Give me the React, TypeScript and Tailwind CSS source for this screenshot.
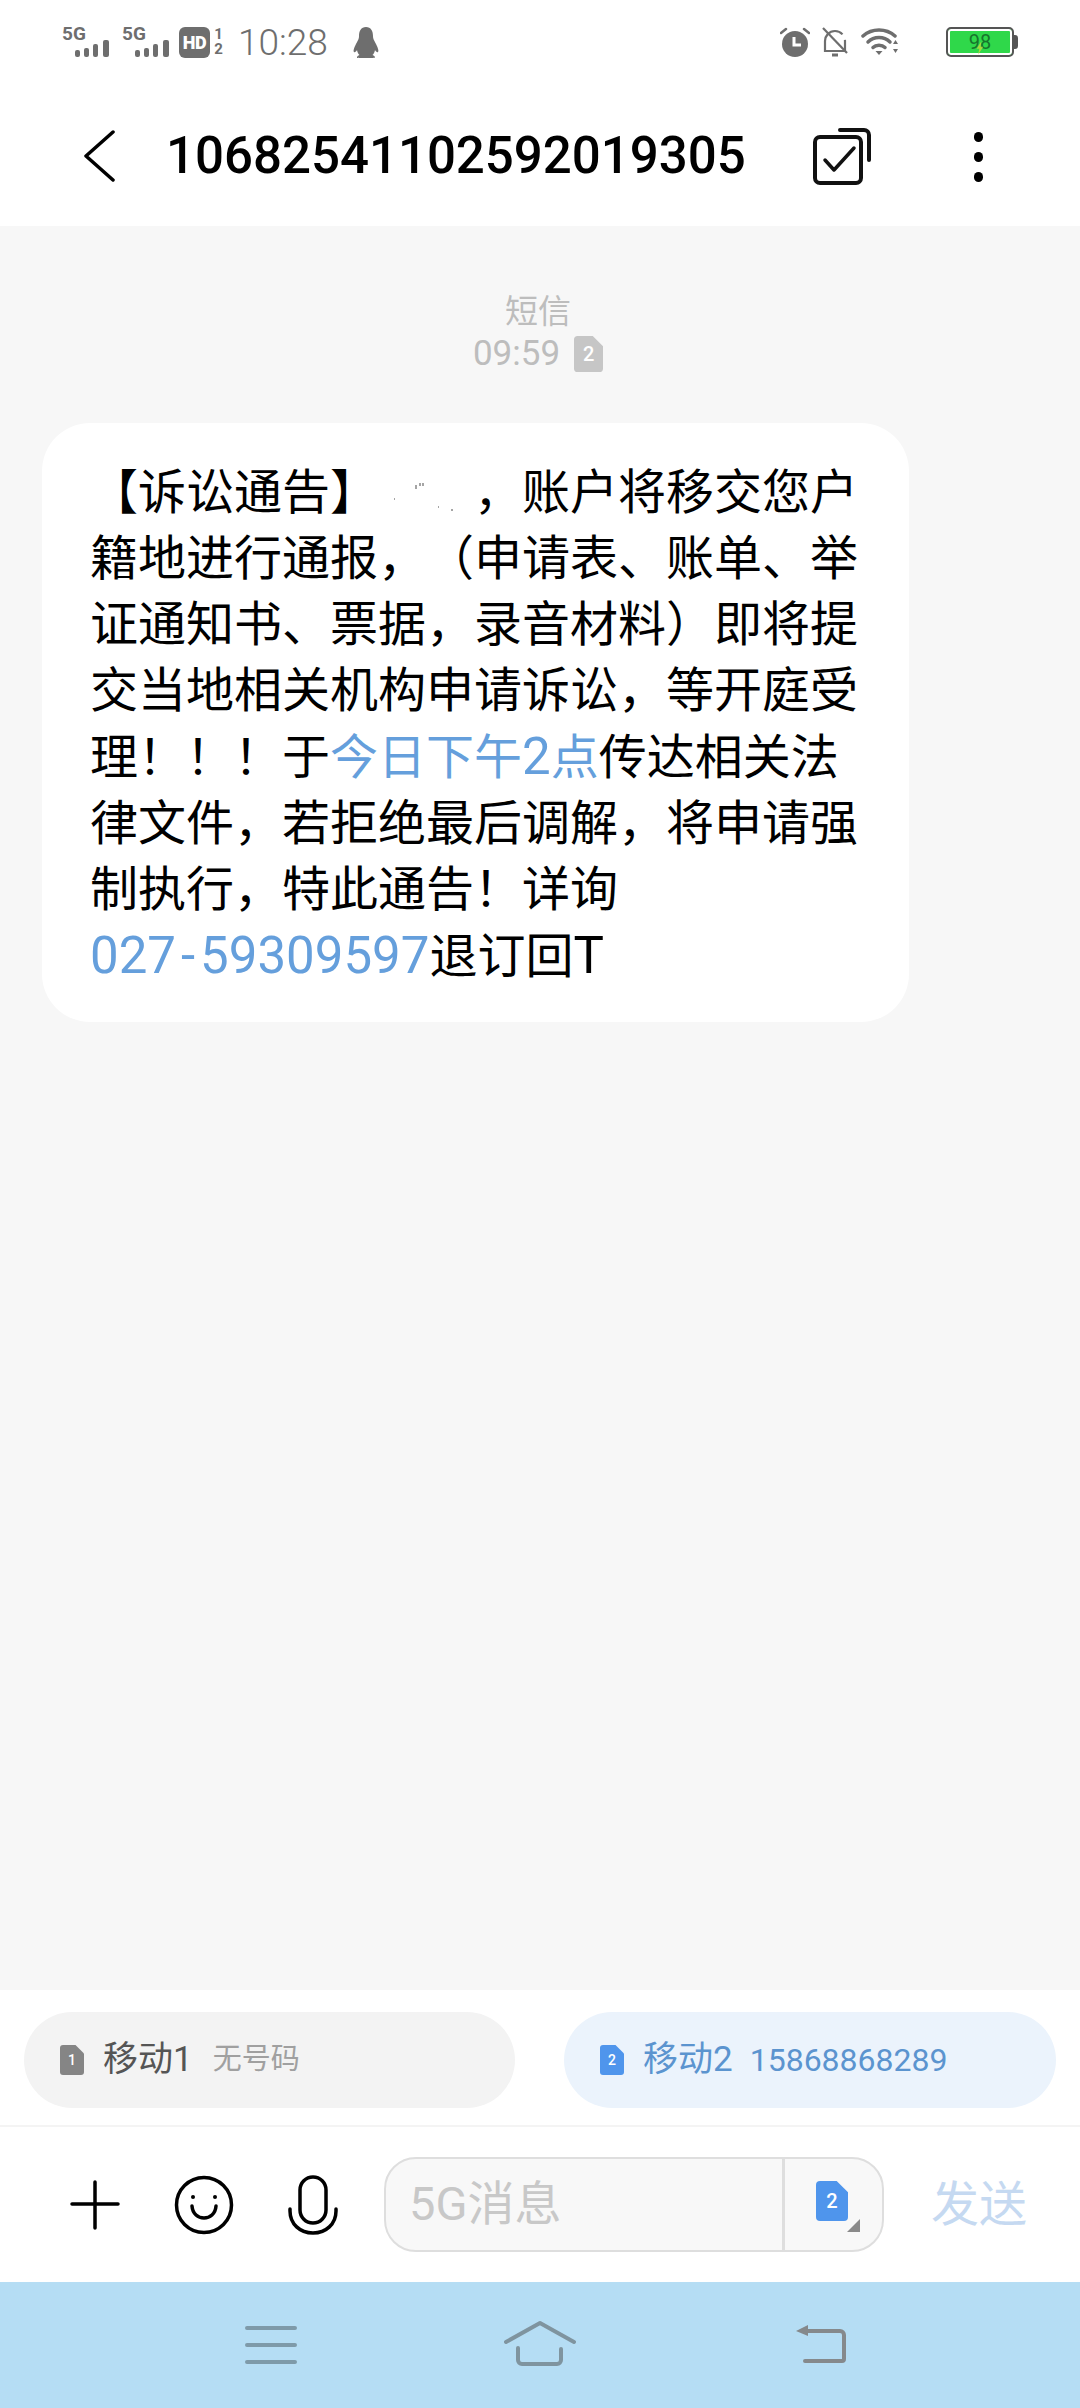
const font = "[font-family:Roboto,'Noto_Sans_CJK_SC',sans-serif]";

function Signal({ className }: { className?: string }) {
  return (
    <div className={`relative h-[30px] w-[48px] ${className ?? ""}`}>
      <span className="absolute left-0 top-[-3px] text-[19px] font-bold leading-[20px] text-[#6e6e6e]">5G</span>
      <svg width="36" height="17" viewBox="0 0 36 17" className="absolute bottom-0 left-[13px]">
        <rect x="0" y="10" width="5" height="7" rx="2" fill="#6e6e6e" />
        <rect x="9" y="8" width="5" height="9" rx="2" fill="#6e6e6e" />
        <rect x="18" y="4" width="5" height="13" rx="2" fill="#6e6e6e" />
        <rect x="28" y="0" width="6" height="17" rx="2" fill="#6e6e6e" />
      </svg>
    </div>
  );
}

function SimIcon({ n, w, h, color, size }: { n: string; w: number; h: number; color: string; size: string }) {
  return (
    <div className="relative flex shrink-0 items-center justify-center" style={{ width: w, height: h }}>
      <svg width={w} height={h} viewBox="0 0 24 30" preserveAspectRatio="none" className="absolute inset-0">
        <path d="M3 0H15.5L24 8.5V27a3 3 0 0 1-3 3H3a3 3 0 0 1-3-3V3a3 3 0 0 1 3-3Z" fill={color} />
      </svg>
      <span className={`relative font-medium leading-none text-white ${size}`}>{n}</span>
    </div>
  );
}

function StatusBar() {
  return (
    <div className="flex h-[84px] items-start pt-[27px] text-[#6e6e6e]">
      <Signal className="ml-[62px]" />
      <Signal className="ml-[12px]" />
      <div className="ml-[9px] flex h-[31px] w-[31px] items-center justify-center rounded-[6px] bg-[#6e6e6e] text-[18px] font-black leading-none tracking-[-0.5px] text-white">
        HD
      </div>
      <div className="ml-[3px] flex h-[30px] w-[11px] flex-col items-center text-[15px] font-bold leading-[15px]">
        <span>1</span>
        <span>2</span>
      </div>
      <span className="ml-[14px] text-[37px] font-light leading-[32px]">10:28</span>
      <svg width="26" height="31" viewBox="0 0 26 31" className="ml-[25px]">
        <path d="M13 0c5 0 7 4 7 9 0 3 1 4 3 8 2 4 3 7 2 8-1 .6-2-.4-3-2-.4 2-1 3.600-2.500 5 1.500.6 2.500 1.400 2.500 2.500 0 .4-3 .5-9 .5s-9-.1-9-.5c0-1.100 1-1.900 2.500-2.500C5 26.600 4.400 25 4 23c-1 1.600-2 2.600-3 2-1-1 0-4 2-8 2-4 3-5 3-8 0-5 2-9 7-9Z" fill="#6e6e6e" />
      </svg>
      <div className="flex-1" />
      <svg width="30" height="30" viewBox="0 0 30 30">
        <circle cx="15" cy="17" r="13" fill="#6e6e6e" />
        <path d="M1 6 6 2M29 6 24 2" stroke="#6e6e6e" strokeWidth="2.500" strokeLinecap="round" />
        <path d="M14 10v8h7" stroke="#fff" strokeWidth="3" fill="none" />
      </svg>
      <svg width="28" height="30" viewBox="0 0 28 30" className="ml-[11px]" fill="none" stroke="#6e6e6e" strokeWidth="2.200">
        <path d="M4 24V14c0-5 4-10 10-10s10 5 10 10v10H4Z" strokeDasharray="34 6" />
        <path d="M2 1 26 26" />
        <path d="M11 28h6" strokeWidth="3" />
      </svg>
      <svg width="38" height="30" viewBox="0 0 38 30" className="ml-[12px]" fill="none" stroke="#6e6e6e" strokeWidth="3.500" strokeLinecap="round">
        <path d="M2 9C11 1 25 1 34 9" />
        <path d="M7 15C13 9 23 9 29 15" />
        <path d="M12 20.500C15 17.500 21 17.500 24 20.500" />
        <path d="M14.500 24h7l-3.500 4Z" fill="#6e6e6e" stroke="none" />
        <path d="M32 17h5l-2.500-4ZM32 22h5l-2.500 4Z" fill="#6e6e6e" stroke="none" />
      </svg>
      <div className="ml-[47px] flex items-center">
        <div className="relative flex h-[30px] w-[68px] items-center justify-center rounded-[5px] border-[2px] border-[#555] bg-[#2fd84a] text-[20px] leading-none text-[#17752c] shadow-[inset_0_0_0_2px_#fff]">
          98
          <svg width="8" height="14" viewBox="0 0 12 20" className="absolute left-[28px] top-[12px]">
            <path d="M8 0 1 11h4l-2 9 8-12H7Z" fill="#d8d83a" opacity="0.700" />
          </svg>
        </div>
        <div className="h-[14px] w-[4px] rounded-r-[3px] bg-[#555]" />
      </div>
      <div className="w-[62px]" />
    </div>
  );
}

function TitleBar() {
  return (
    <div className="flex h-[142px] items-start bg-white">
      <svg width="32" height="52" viewBox="0 0 32 52" className="ml-[84px] mt-[46px]" fill="none" stroke="#000" strokeWidth="3.500" strokeLinecap="round" strokeLinejoin="round">
        <path d="M29 2 2 26l27 24" />
      </svg>
      <span className="ml-[50px] mt-[42px] text-[51px] font-medium leading-[60px] text-black">10682541102592019305</span>
      <svg width="60" height="60" viewBox="0 0 60 60" className="ml-[67px] mt-[43px]" fill="none" stroke="#111" strokeWidth="4">
        <rect x="2" y="10" width="46" height="46" rx="5" />
        <path d="M27 3h24a5 5 0 0 1 5 5v25" strokeLinecap="round" />
        <path d="M12 33 21 43 41 21" strokeWidth="3.500" strokeLinecap="round" strokeLinejoin="round" />
      </svg>
      <div className="ml-[101px] mt-[48px] flex flex-col gap-[10.500px]">
        <span className="h-[9.500px] w-[9.500px] rounded-full bg-black" />
        <span className="h-[9.500px] w-[9.500px] rounded-full bg-black" />
        <span className="h-[9.500px] w-[9.500px] rounded-full bg-black" />
      </div>
    </div>
  );
}

function Message() {
  return (
    <div className="ml-[42px] mt-[49px] w-[867px] rounded-[48px] bg-white pb-[32px] pl-[48px] pr-[50px] pt-[37px] text-[48px] leading-[66px] text-black [text-spacing-trim:space-all]">
      【诉讼通告】
      <svg width="96" height="40" viewBox="0 0 96 40" className="inline-block align-[-8px]">
        <path d="M16 22h1M38 8v4M42 6v3M45 6v3M60 30h1M74 32v2" stroke="#888" strokeWidth="1.500" />
      </svg>
      ，账户将移交您户籍地进行通报，（申请表、账单、举证通知书、票据，录音材料）即将提交当地相关机构申请诉讼，等开庭受理！！！于
      <span className="text-[#659fdc]">
        今日下午<span className="text-[51px]">2</span>点
      </span>
      传达相关法律文件，若拒绝最后调解，将申请强制执行，特此通告！详询
      <span className="whitespace-nowrap text-[51px] text-[#659fdc]">
        027<span className="px-[5px]">-</span>59309597
      </span>
      退订回<span className="text-[51px]">T</span>
    </div>
  );
}

function SimPicker() {
  return (
    <div className="flex h-[137px] items-start justify-between border-b-[2px] border-[#f4f4f4] bg-white px-[24px] pt-[22px]">
      <div className="flex h-[96px] w-[491px] items-center rounded-full bg-[#f3f3f3] pl-[36px]">
        <SimIcon n="1" w={24} h={30} color="#858585" size="text-[14px]" />
        <span className="ml-[19px] text-[35px] text-[#555]">移动1</span>
        <span className="ml-[20px] text-[29px] text-[#a0a0a0]">无号码</span>
      </div>
      <div className="flex h-[96px] w-[492px] items-center rounded-full bg-[#ebf3fc] pl-[36px]">
        <SimIcon n="2" w={24} h={30} color="#4f95ec" size="text-[14px]" />
        <span className="ml-[19px] text-[35px] text-[#5b94cf]">移动2</span>
        <span className="ml-[17px] text-[32px] text-[#5b94cf]">15868868289</span>
      </div>
    </div>
  );
}

function Composer() {
  return (
    <div className="flex h-[155px] items-center bg-white">
      <svg width="50" height="50" viewBox="0 0 50 50" className="ml-[70px]" stroke="#000" strokeWidth="3.500" strokeLinecap="round">
        <path d="M25 2v46M2 24h46" />
      </svg>
      <svg width="60" height="60" viewBox="0 0 60 60" className="ml-[54px]" fill="none" stroke="#000" strokeWidth="3.500" strokeLinecap="round">
        <circle cx="30" cy="30" r="27.500" />
        <path d="M18 31c1 16 23 16 24 0" />
        <circle cx="19" cy="22" r="2" fill="#000" stroke="none" />
        <circle cx="41" cy="22" r="2" fill="#000" stroke="none" />
      </svg>
      <svg width="50" height="60" viewBox="0 0 50 60" className="ml-[54px]" fill="none" stroke="#000" strokeWidth="3.500" strokeLinecap="round">
        <rect x="12" y="2" width="26" height="46" rx="13" />
        <path d="M2 34v2c0 13 10 22 23 22s23-9 23-22v-2" />
      </svg>
      <div className="ml-[46px] flex h-[95px] w-[500px] rounded-[32px] border-[2px] border-[#dedede] bg-[#f8f8f8]">
        <div className="flex w-[399px] items-center border-r-[3px] border-[#dedede] pl-[23px] text-[47px] text-[#c8c8c8]">5G消息</div>
        <div className="relative flex flex-1 items-start pl-[31px] pt-[22px]">
          <SimIcon n="2" w={32} h={40} color="#4f95ec" size="text-[20px]" />
          <span className="absolute left-[62px] top-[60px] h-0 w-0 border-b-[13px] border-l-[13px] border-b-[#8a8a8a] border-l-transparent" />
        </div>
      </div>
      <span className="ml-[47px] text-[48px] leading-none text-[#c5d9f1]">发送</span>
    </div>
  );
}

function NavBar() {
  return (
    <div className="flex h-[126px] items-start bg-[#b5ddf4]">
      <svg width="52" height="40" viewBox="0 0 52 40" className="ml-[245px] mt-[44px]" stroke="#7e9aa9" strokeWidth="4" strokeLinecap="round">
        <path d="M2 2h48M2 19h48M2 36h48" />
      </svg>
      <svg width="74" height="48" viewBox="0 0 74 48" className="ml-[206px] mt-[38px]" fill="none" stroke="#7f949f" strokeWidth="4" strokeLinecap="round" strokeLinejoin="round">
        <path d="M3 22 37 3l34 19" />
        <path d="M15 28v12a4 4 0 0 0 4 4h35a4 4 0 0 0 4-4v-11" />
      </svg>
      <svg width="54" height="40" viewBox="0 0 54 40" className="ml-[217px] mt-[43px]" fill="none" stroke="#85898c" strokeWidth="4" strokeLinecap="round" strokeLinejoin="round">
        <path d="M12 6h34a4 4 0 0 1 4 4v24a2 2 0 0 1-2 2H11" />
        <path d="M14 0v11L2 6Z" fill="#85898c" stroke="none" />
      </svg>
    </div>
  );
}

export default function App() {
  return (
    <div className={`flex h-[2408px] w-[1080px] flex-col bg-white ${font}`} lang="zh-CN">
      <StatusBar />
      <TitleBar />
      <div className="flex-1 bg-[#f7f7f7] pt-[68px]">
        <div className="flex flex-col items-center pr-[4px] text-[#bdbdbd]">
          <span className="text-[33px] leading-[36px]">短信</span>
          <div className="mt-[4px] flex items-center gap-[14px] text-[35px] leading-[40px]">
            <span>09:59</span>
            <SimIcon n="2" w={29} h={36} color="#c6c6c6" size="text-[20px]" />
          </div>
        </div>
        <Message />
      </div>
      <SimPicker />
      <Composer />
      <NavBar />
    </div>
  );
}
